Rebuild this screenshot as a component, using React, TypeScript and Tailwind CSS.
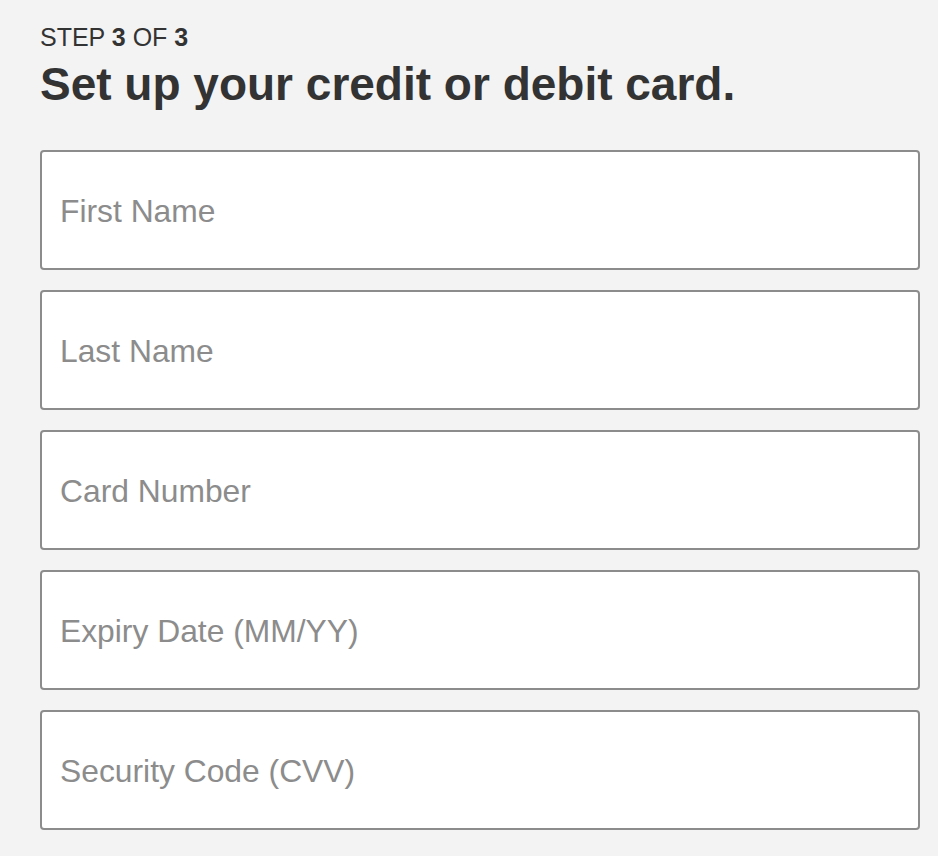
import React from "react";

const fields = [
  "First Name",
  "Last Name",
  "Card Number",
  "Expiry Date (MM/YY)",
  "Security Code (CVV)",
];

export default function App() {
  return (
    <div
      className="min-h-[856px] w-full bg-[#f3f3f3] pl-[40px] pt-[22px] text-[#333333]"
      style={{ fontFamily: '"Liberation Sans", Arial, sans-serif' }}
    >
      <div className="text-[25px] leading-[30px]">
        STEP <span className="font-bold">3</span> OF{" "}
        <span className="font-bold">3</span>
      </div>
      <h1 className="mt-[5px] text-[46px] font-bold leading-[54px]">
        Set up your credit or debit card.
      </h1>
      <div className="mt-[39px] flex w-[880px] flex-col gap-[20px]">
        {fields.map((f) => (
          <input
            key={f}
            type="text"
            placeholder={f}
            className="h-[120px] w-full rounded-[4px] border-2 border-[#8c8c8c] bg-white px-[18px] pt-[2px] text-[31.8px] text-[#333333] outline-none placeholder:text-[#8c8c8c]"
            style={{ fontFamily: '"Liberation Sans", Arial, sans-serif' }}
          />
        ))}
      </div>
    </div>
  );
}
